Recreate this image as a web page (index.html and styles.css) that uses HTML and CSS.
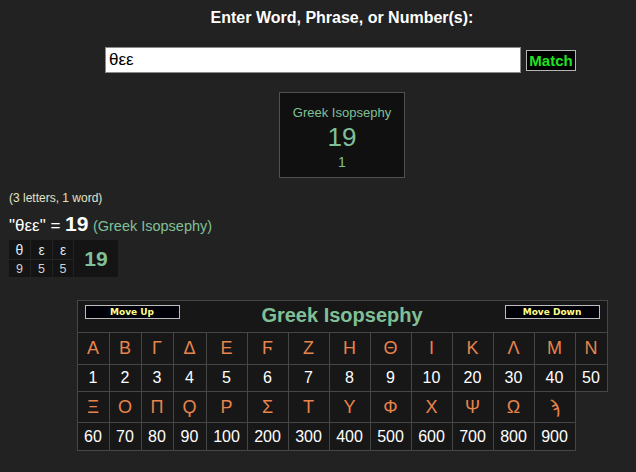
FILE: index.html
```html
<!DOCTYPE html>
<html>
<head>
<meta charset="utf-8">
<link rel="stylesheet" href="styles.css">
</head>
<body>
<div class="centered">
  <h1 class="title">Enter Word, Phrase, or Number(s):</h1>
  <div class="search-row">
    <input class="search-input" type="text" value="θεε">
    <button class="match-btn">Match</button>
  </div>
  <div class="result-box">
    <div class="rb-name">Greek Isopsephy</div>
    <div class="rb-value">19</div>
    <div class="rb-count">1</div>
  </div>
</div>

<div class="details">
  <div class="stats">(3 letters, 1 word)</div>
  <div class="equation"><span class="eq-word">"θεε" = </span><span class="eq-num">19</span> <span class="eq-cipher">(Greek Isopsephy)</span></div>
  <div class="breakdown">
    <div class="bd-letter">θ</div>
    <div class="bd-letter">ε</div>
    <div class="bd-letter">ε</div>
    <div class="bd-total">19</div>
    <div class="bd-num">9</div>
    <div class="bd-num">5</div>
    <div class="bd-num">5</div>
  </div>
</div>

<div class="centered">
  <table class="cipher">
    <colgroup>
      <col class="c-s"><col class="c-s"><col class="c-s"><col class="c-m">
      <col class="c-w"><col class="c-w"><col class="c-w"><col class="c-w"><col class="c-w"><col class="c-w"><col class="c-w"><col class="c-w"><col class="c-w">
      <col class="c-s">
    </colgroup>
    <tr class="r-head">
      <td colspan="14">
        <div class="head">
          <span class="move-btn">Move Up</span>
          <span class="cipher-name">Greek Isopsephy</span>
          <span class="move-btn">Move Down</span>
        </div>
      </td>
    </tr>
    <tr class="r-let1">
      <td>Α</td><td>Β</td><td>Γ</td><td>Δ</td><td>Ε</td><td>Ϝ</td><td>Ζ</td><td>Η</td><td>Θ</td><td>Ι</td><td>Κ</td><td>Λ</td><td>Μ</td><td>Ν</td>
    </tr>
    <tr class="r-num1">
      <td>1</td><td>2</td><td>3</td><td>4</td><td>5</td><td>6</td><td>7</td><td>8</td><td>9</td><td>10</td><td>20</td><td>30</td><td>40</td><td>50</td>
    </tr>
    <tr class="r-let2">
      <td>Ξ</td><td>Ο</td><td>Π</td><td>Ϙ</td><td>Ρ</td><td>Σ</td><td>Τ</td><td>Υ</td><td>Φ</td><td>Χ</td><td>Ψ</td><td>Ω</td><td>ϡ</td>
    </tr>
    <tr class="r-num2">
      <td>60</td><td>70</td><td>80</td><td>90</td><td>100</td><td>200</td><td>300</td><td>400</td><td>500</td><td>600</td><td>700</td><td>800</td><td>900</td>
    </tr>
  </table>
</div>
</body>
</html>
```

FILE: styles.css
```css
html, body {
  margin: 0;
  padding: 0;
  background: #222222;
  overflow: hidden;
}
body {
  font-family: "Liberation Sans", Arial, sans-serif;
  color: #ffffff;
  width: 636px;
  height: 472px;
}
.centered {
  padding-left: 48px;
  display: flex;
  flex-direction: column;
  align-items: center;
}
.title {
  margin: 9px 0 0 0;
  font-size: 16px;
  line-height: 18px;
  font-weight: bold;
  color: #ffffff;
}
.search-row {
  margin-top: 20px;
  display: flex;
  align-items: center;
  gap: 5px;
  margin-right: 3px;
}
.search-input {
  box-sizing: border-box;
  width: 416px;
  height: 26px;
  margin: 0;
  border: 1px solid #8a8a8a;
  padding: 0 3px;
  font-family: "Liberation Sans", "DejaVu Sans", sans-serif;
  font-size: 17px;
  color: #000;
  background: #fff;
  outline: none;
}
.match-btn {
  box-sizing: border-box;
  width: 50px;
  height: 21px;
  margin: 0;
  padding: 0;
  background: #000;
  border: 1px solid #b5b5b5;
  color: #22e022;
  font-family: "Liberation Sans", Arial, sans-serif;
  font-weight: bold;
  font-size: 15px;
  line-height: 19px;
}
.result-box {
  box-sizing: border-box;
  margin-top: 19px;
  width: 126px;
  height: 86px;
  background: #101010;
  border: 1px solid #505050;
  display: flex;
  flex-direction: column;
  align-items: center;
  color: #80c098;
}
.rb-name {
  margin-top: 12px;
  font-size: 13px;
  line-height: 15px;
}
.rb-value {
  margin-top: 2px;
  font-size: 26px;
  line-height: 30px;
}
.rb-count {
  margin-top: 2px;
  font-size: 14px;
  line-height: 16px;
}
.details {
  padding-left: 9px;
}
.stats {
  margin-top: 13px;
  font-size: 12px;
  line-height: 14px;
  color: #e2e2c8;
}
.equation {
  margin-top: 7px;
  line-height: 24px;
  white-space: nowrap;
}
.eq-word {
  font-size: 17px;
  color: #ffffff;
}
.eq-num {
  font-size: 21px;
  font-weight: bold;
  color: #ffffff;
}
.eq-cipher {
  font-size: 14.5px;
  color: #80c098;
}
.breakdown {
  margin-top: 2px;
  display: grid;
  grid-template-columns: 21px 21px 20px 44px;
  grid-template-rows: 19px 17px;
  gap: 1px;
  width: max-content;
}
.breakdown > div {
  background: #141414;
  display: flex;
  align-items: center;
  justify-content: center;
}
.bd-letter {
  font-size: 14px;
  color: #dce6f0;
}
.bd-num {
  font-size: 12.5px;
  color: #d0d0d0;
}
.bd-total {
  grid-column: 4;
  grid-row: 1 / span 2;
  font-size: 21px;
  font-weight: bold;
  color: #80c098;
}
.bd-letter:nth-child(1) { grid-column: 1; grid-row: 1; }
.bd-letter:nth-child(2) { grid-column: 2; grid-row: 1; }
.bd-letter:nth-child(3) { grid-column: 3; grid-row: 1; }
.cipher {
  margin-top: 23px;
  border-collapse: collapse;
  table-layout: fixed;
  width: 531px;
}
.c-s { width: 32px; }
.c-m { width: 33px; }
.c-w { width: 41px; }
.cipher td {
  border: 1px solid #464646;
  background: #171717;
  padding: 0;
  text-align: center;
  font-size: 16px;
  color: #ffffff;
}
.r-head td {
  height: 31px;
  vertical-align: top;
}
.head {
  display: grid;
  grid-template-columns: 95px 1fr 95px;
  align-items: start;
  padding: 4px 7px 0 7px;
}
.move-btn {
  box-sizing: border-box;
  height: 14px;
  background: #000008;
  border: 1px solid #bdbdbd;
  color: #ffff88;
  font-family: "DejaVu Sans", Verdana, sans-serif;
  font-weight: bold;
  font-size: 9px;
  line-height: 12px;
  text-align: center;
}
.cipher-name {
  font-size: 20px;
  line-height: 23px;
  font-weight: bold;
  color: #80c098;
  margin-top: -1px;
}
.r-let1 td, .r-let2 td {
  font-size: 18px;
  color: #e8844c;
  font-family: "Liberation Sans", "DejaVu Sans", sans-serif;
}
.r-let1 td { height: 31px; }
.r-num1 td { height: 26px; }
.r-let2 td { height: 30px; }
.r-num2 td { height: 27px; }
```
